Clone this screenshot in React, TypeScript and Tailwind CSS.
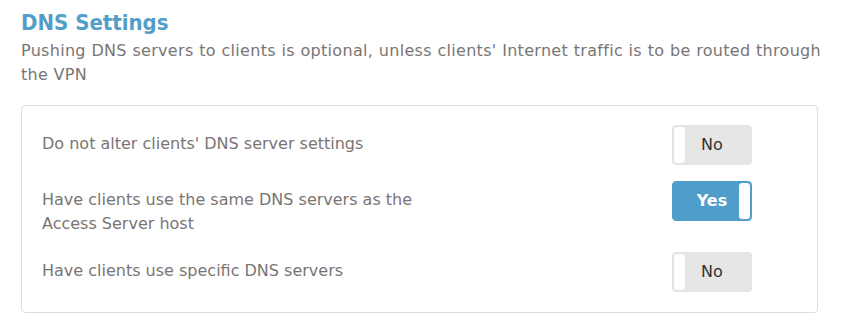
import React, { useState } from 'react';

interface DnsOption {
  id: string;
  label: string;
  enabled: boolean;
}

const options: DnsOption[] = [
  { id: 'none', label: "Do not alter clients' DNS server settings", enabled: false },
  { id: 'host', label: 'Have clients use the same DNS servers as the Access Server host', enabled: true },
  { id: 'specific', label: 'Have clients use specific DNS servers', enabled: false },
];

const Toggle: React.FC<{ on: boolean; onClick: () => void }> = ({ on, onClick }) => {
  if (on) {
    return (
      <button
        onClick={onClick}
        className="flex h-[40px] w-[80px] items-stretch rounded-[4px] border border-[#4f9dca] bg-[#4f9dca] p-0"
      >
        <span className="flex flex-1 items-center justify-center pl-[13px] text-[16px] font-bold text-white">Yes</span>
        <span className="w-[13px] rounded-[4px] border border-[#4f9dca] bg-white" />
      </button>
    );
  }
  return (
    <button
      onClick={onClick}
      className="flex h-[40px] w-[80px] items-stretch rounded-[4px] border border-[#e3e3e3] bg-[#e6e6e6] p-0"
    >
      <span className="w-[13px] rounded-[4px] border border-[#e3e3e3] bg-white" />
      <span className="flex flex-1 items-center justify-center pr-[13px] text-[16px] text-[#333]">No</span>
    </button>
  );
};

export default function App() {
  const [state, setState] = useState(options.map((o) => o.enabled));

  return (
    <div className="min-h-[326px] bg-white px-[21px] pt-[9px] font-['DejaVu_Sans',Verdana,sans-serif]">
      <h2 className="font-['DejaVu_Sans_Condensed','DejaVu_Sans',sans-serif] text-[22px] font-bold leading-[28px] text-[#539ec9]">
        DNS Settings
      </h2>
      <p className="mt-[2px] text-justify text-[16px] leading-[24px] tracking-[0.3px] text-[#7a7575]">
        Pushing DNS servers to clients is optional, unless clients' Internet traffic is to be routed through the VPN
      </p>

      <div className="mt-[18px] flex w-[797px] flex-col gap-[16px] rounded-[4px] border border-[#dedede] px-[20px] pb-[20px] pt-[19px]">
        {options.map((opt, i) => (
          <div key={opt.id} className="flex items-start">
            <div className="w-[380px] pt-[7px] text-[16px] leading-[24px] text-[#7a7575]">{opt.label}</div>
            <div className="ml-[250px]">
              <Toggle
                on={state[i]}
                onClick={() => setState((s) => s.map((v, j) => (j === i ? !v : v)))}
              />
            </div>
          </div>
        ))}
      </div>
    </div>
  );
}
